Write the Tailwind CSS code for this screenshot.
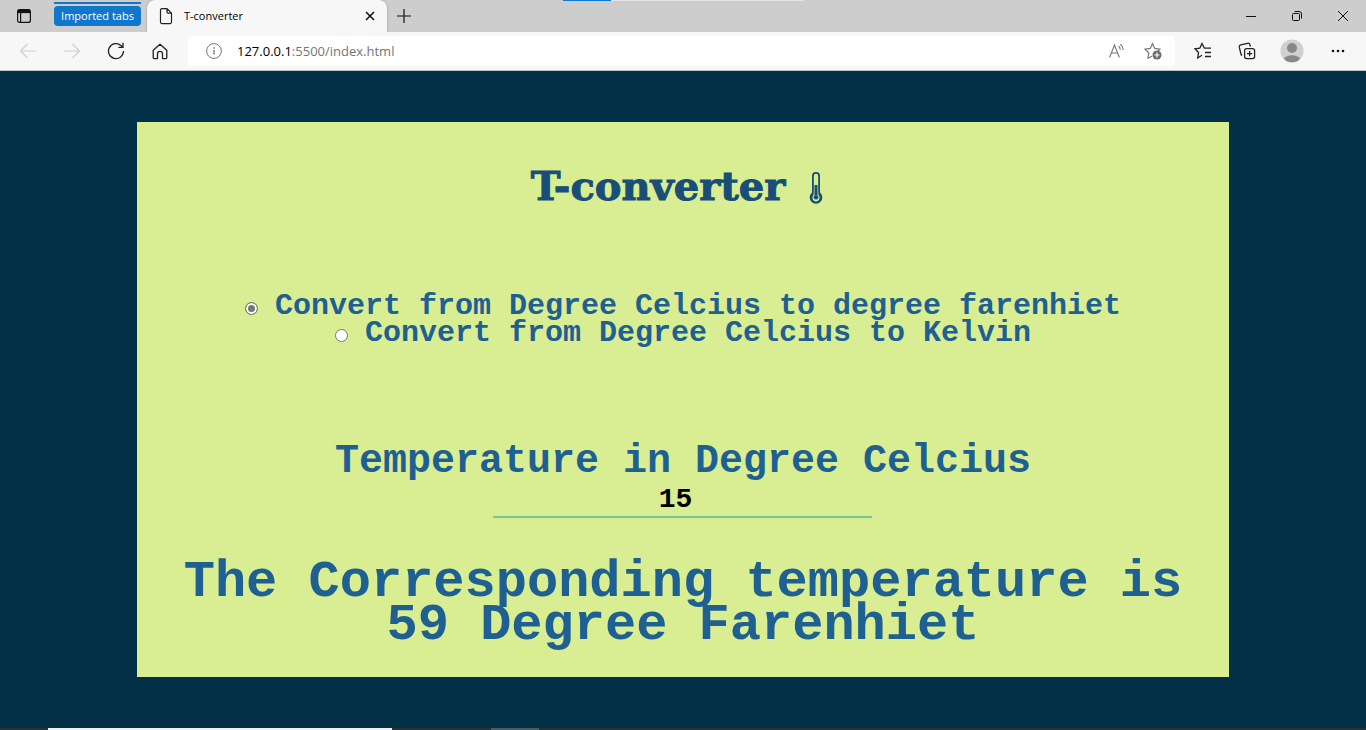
<!DOCTYPE html>
<html lang="en">
<head>
<meta charset="utf-8">
<meta name="viewport" content="width=device-width, initial-scale=1">
<title>T-converter</title>
<script src="https://cdn.jsdelivr.net/npm/@tailwindcss/browser@4"></script>
</head>
<body class="flex min-h-screen flex-col bg-[#023047] font-['Open_Sans',sans-serif] text-black">
<header class="relative">
  <!-- loading bar at the top edge -->
  <div class="absolute top-0 left-[563px] flex h-px w-[241px] bg-[#e6e6e6]"><span class="w-12 bg-[#0a78d4]"></span></div>
  <div class="flex h-8 items-stretch bg-[#cdcdcd]">
    <button aria-label="Tab actions" class="flex w-[54px] items-center pl-4">
      <svg width="16" height="16" viewBox="0 0 16 16" fill="none" stroke="#111" stroke-width="1.2"><rect x="1.6" y="1.6" width="12.8" height="12.8" rx="2"/><path d="M2 3.4h12" stroke-width="3.4"/><path d="M4.6 5v9"/></svg>
    </button>
    <div class="flex w-[87px] flex-col gap-[2px] pt-[2px]">
      <span class="h-[2px] bg-[#0f78cb]"></span>
      <button class="h-5 rounded bg-[#0f78cb] text-[11px] leading-5 whitespace-nowrap text-white">Imported tabs</button>
    </div>
    <div class="ml-[6px] flex w-[240px] items-center rounded-t-lg bg-[#f7f7f7] pr-[7px] pl-3 shadow-[0_0_2px_rgba(0,0,0,0.35)]">
      <svg width="14" height="18" viewBox="0 0 14 18" fill="none" stroke="#222" stroke-width="1.2" stroke-linejoin="round"><path d="M3 1.6h5l4.500 4.500v9a1.500 1.500 0 0 1-1.500 1.500H3a1.500 1.500 0 0 1-1.500-1.500V3.100A1.500 1.500 0 0 1 3 1.600zM8 1.600v3.500a1 1 0 0 0 1 1h3.500"/></svg>
      <span class="ml-[11px] flex-1 text-[11px]">T-converter</span>
      <button aria-label="Close tab" class="grid size-5 place-items-center"><svg width="10" height="10" viewBox="0 0 10 10" stroke="#111" stroke-width="1.600"><path d="M1 1l8 8M9 1L1 9"/></svg></button>
    </div>
    <button aria-label="New tab" class="grid w-[34px] place-items-center"><svg width="14" height="14" viewBox="0 0 14 14" stroke="#111" stroke-width="1.200"><path d="M7 0v14M0 7h14"/></svg></button>
    <div class="ml-auto flex">
      <button aria-label="Minimize" class="grid w-[46px] place-items-center"><svg width="10" height="10" viewBox="0 0 10 10" stroke="#111"><path d="M0 5.500h10"/></svg></button>
      <button aria-label="Restore" class="grid w-[46px] place-items-center"><svg width="10" height="10" viewBox="0 0 10 10" fill="none" stroke="#111"><rect x=".5" y="2.500" width="7" height="7" rx="1"/><path d="M2.500.5H7a2.500 2.500 0 0 1 2.500 2.500v4.500"/></svg></button>
      <button aria-label="Close" class="grid w-[46px] place-items-center"><svg width="10" height="10" viewBox="0 0 10 10" stroke="#111"><path d="M0 0l10 10M10 0L0 10"/></svg></button>
    </div>
  </div>
  <div class="relative flex h-[39px] items-center border-b border-[#c4c4c4] bg-[#f7f7f7] pr-[5px] pl-[6px]">
    <button aria-label="Back" class="grid w-11 place-items-center"><svg width="18" height="18" viewBox="0 0 18 18" fill="none" stroke="#cfcfcf" stroke-width="1.200"><path d="M17 9H1.500M8.500 2L1.500 9l7 7"/></svg></button>
    <button aria-label="Forward" class="grid w-11 place-items-center"><svg width="18" height="18" viewBox="0 0 18 18" fill="none" stroke="#cfcfcf" stroke-width="1.200"><path d="M1 9h15.500M9.500 2l7 7-7 7"/></svg></button>
    <button aria-label="Refresh" class="grid w-11 place-items-center"><svg width="18" height="18" viewBox="0 0 18 18" fill="none" stroke="#222" stroke-width="1.300"><path d="M16.500 9A7.500 7.500 0 1 1 14 3.500L15.600 5M16 .8V5.400h-4.600"/></svg></button>
    <button aria-label="Home" class="grid w-11 place-items-center"><svg width="16" height="17" viewBox="0 0 16 17" fill="none" stroke="#222" stroke-width="1.300" stroke-linejoin="round"><path d="M1.200 7.200L8 1.200l6.800 6v7.200a1.200 1.200 0 0 1-1.200 1.200h-3.100v-4.800a2.500 2.500 0 0 0-5 0v4.800H2.400a1.200 1.200 0 0 1-1.200-1.200z"/></svg></button>
    <div class="ml-[6px] flex h-[30px] flex-1 items-center rounded bg-white pl-[18px]">
      <svg width="16" height="16" viewBox="0 0 16 16" fill="none" stroke="#777"><circle cx="8" cy="8" r="7.400"/><path d="M8 7v4.500M8 4.300v1.400" stroke-width="1.400"/></svg>
      <a href="#" class="ml-[15px] text-[13px] leading-5 text-[#757575]"><span class="text-black">127.0.0.1</span>:5500/index.html</a>
      <button aria-label="Read aloud" class="ml-auto grid w-9 place-items-center"><svg width="16" height="16" viewBox="0 0 16 16" fill="none" stroke="#777" stroke-width="1.100"><path d="M.6 14.500L5.500 2l4.900 12.500M2.400 10h6.200M9.700 3.200a5 5 0 0 1 1.500 3.600M11.300 1.200a8 8 0 0 1 3 5.800"/></svg></button>
      <button aria-label="Add to favorites" class="mr-1 grid w-9 place-items-center"><svg width="18" height="18" viewBox="0 0 18 18" fill="none" stroke="#777" stroke-width="1.200"><path d="M8 14.200l-4 2 .8-5.200L1.100 7.200l5.100-.8L8.500 1.700l2.300 4.700 5.200.8-2 2"/><circle cx="13" cy="13" r="4.500" fill="#6b6b6b" stroke="none"/><path d="M13 10.500v5M10.500 13h5" stroke="#fff"/></svg></button>
    </div>
    <div class="flex items-center pl-[6px]">
      <button aria-label="Favorites" class="grid w-11 place-items-center"><svg width="18" height="18" viewBox="0 0 18 18" fill="none" stroke="#222" stroke-width="1.300"><path d="M8 13.200L3.700 16l.8-5.500L1 6.800l4.800-.7L8 1.500l2.300 4.600H17M11 10.500h6M11 14.500h6"/></svg></button>
      <button aria-label="Collections" class="grid w-11 place-items-center"><svg width="18" height="18" viewBox="0 0 18 18" fill="none" stroke="#222" stroke-width="1.300"><rect x="6.600" y="6.600" width="10" height="10" rx="2"/><path d="M11.600 9v5.200M9 11.600h5.200M4.200 13.400A2 2 0 0 1 2.900 12L1.300 5.200a2 2 0 0 1 1.400-2.300l6.800-1.600a2 2 0 0 1 2.400 1.400l.5 1.800"/></svg></button>
      <button aria-label="Profile" class="grid w-[46px] place-items-center"><svg width="24" height="24" viewBox="0 0 24 24"><circle cx="12" cy="12" r="11.500" fill="#d2d0ce"/><circle cx="12" cy="9" r="5" fill="#8a8886"/><path d="M4 20a8.500 5.500 0 0 1 16 0 11.500 11.500 0 0 1-16 0z" fill="#8a8886"/></svg></button>
      <button aria-label="Settings and more" class="grid w-[46px] place-items-center"><svg width="14" height="4" viewBox="0 0 14 4" fill="#111"><circle cx="2" cy="2" r="1.300"/><circle cx="7" cy="2" r="1.300"/><circle cx="12" cy="2" r="1.300"/></svg></button>
    </div>
  </div>
</header>
<main class="mx-auto mt-[51px] mb-[51px] flex w-4/5 flex-1 flex-col items-center bg-[#d9ed92] px-6 pt-10 text-center font-['Liberation_Mono',monospace] font-bold text-[#1e6091]">
  <h1 class="flex items-center gap-6 font-['DejaVu_Serif',serif] text-[40px] leading-[48px] font-bold text-[#184e77] [-webkit-text-stroke:1px_#184e77]">T-converter
    <svg aria-hidden="true" class="mt-1 mr-3" width="14" height="32" viewBox="0 0 14 32">
      <path d="M3 20.500V4a4 4 0 0 1 8 0V20.500a6.300 6.300 0 1 1-8 0z" fill="#184e77"/>
      <path d="M4.800 21.500V4a2.200 2.200 0 0 1 4.400 0V21.500a4.500 4.500 0 1 1-4.400 0z" fill="#d9ed92"/>
      <path d="M5.500 13h3v10h-3z" fill="#184e77"/>
      <path d="M4.300 22.200a4.500 4.500 0 1 0 5.400 0" fill="none" stroke="#184e77" stroke-width="1.800"/>
      <circle cx="7" cy="25.300" r="2.300" fill="#184e77"/>
    </svg>
  </h1>
  <form class="flex w-full flex-1 flex-col items-center">
    <div class="mt-[83px] flex flex-col items-center">
      <label class="flex h-[27px] items-center gap-[17px] text-[30px] leading-[27px] whitespace-nowrap"><input type="radio" name="unit" checked class="mt-1 size-[13px] appearance-none rounded-full border border-[#767676] bg-white checked:bg-[#767676] checked:shadow-[inset_0_0_0_2px_white]">Convert from Degree Celcius to degree farenhiet</label>
      <label class="flex h-[27px] items-center gap-[17px] text-[30px] leading-[27px] whitespace-nowrap"><input type="radio" name="unit" class="mt-1 size-[13px] appearance-none rounded-full border border-[#767676] bg-white checked:bg-[#767676] checked:shadow-[inset_0_0_0_2px_white]">Convert from Degree Celcius to Kelvin</label>
    </div>
    <label for="temp" class="mt-[95px] text-[40px] leading-[40px] whitespace-nowrap">Temperature in Degree Celcius</label>
    <input id="temp" type="number" value="15" class="h-9 w-[379px] border-b-2 border-[#76c893] bg-transparent text-center text-[28px] leading-8 text-black outline-none">
    <output for="temp" class="mt-[43px] text-[52px] leading-[43px]">The Corresponding temperature is<br>59 Degree Farenhiet</output>
  </form>
</main>
<footer class="flex h-[2px] bg-[#263238] pl-12"><span class="w-[344px] bg-[#f0f0f0]"></span><span class="ml-[99px] w-12 bg-[#4d5b64]"></span></footer>
</body>
</html>
